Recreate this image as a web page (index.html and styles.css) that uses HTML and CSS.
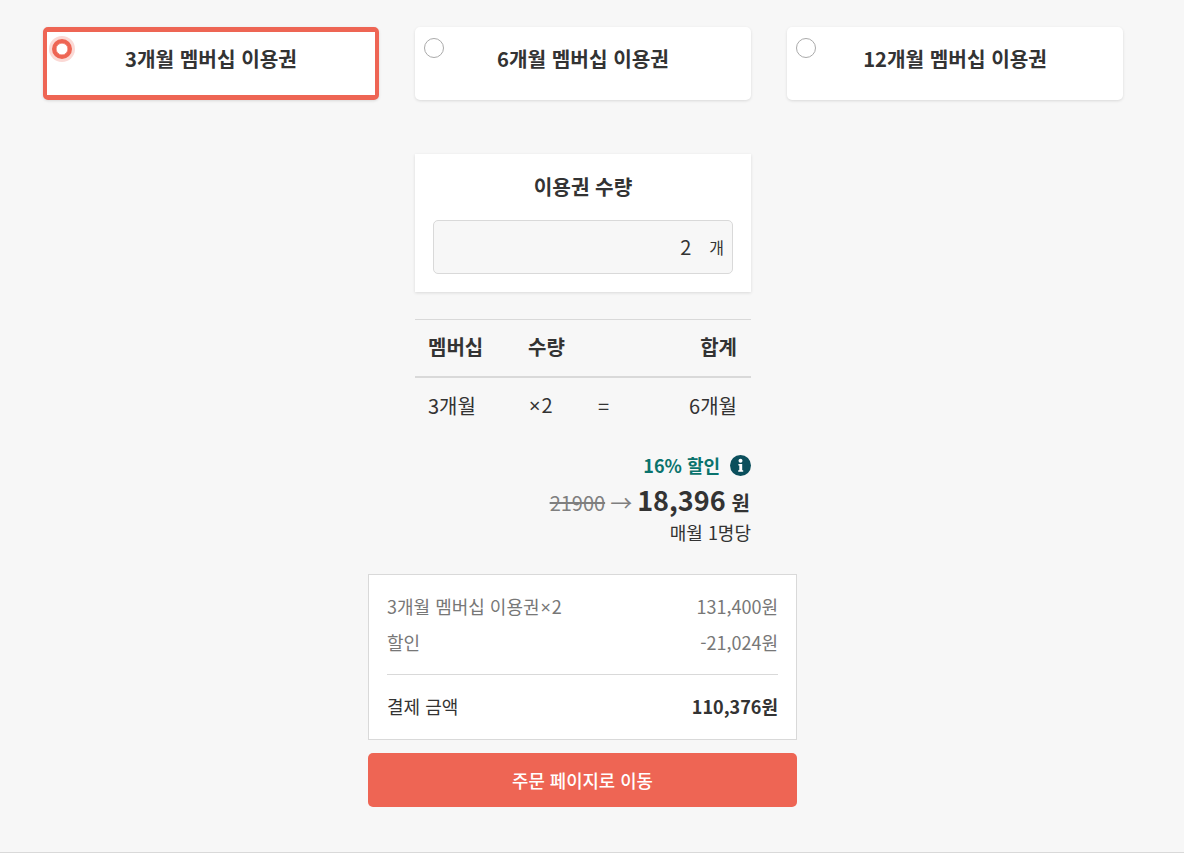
FILE: index.html
```html
<!DOCTYPE html>
<html lang="ko">
<head>
<meta charset="utf-8">
<title>멤버십 이용권</title>
<link rel="stylesheet" href="styles.css">
</head>
<body>
<main class="page">
  <section class="plans">
    <div class="plan plan-active"><span class="radio radio-on"></span><span class="plan-name">3개월 멤버십 이용권</span></div>
    <div class="plan"><span class="radio"></span><span class="plan-name">6개월 멤버십 이용권</span></div>
    <div class="plan"><span class="radio"></span><span class="plan-name">12개월 멤버십 이용권</span></div>
  </section>
  <section class="column">
    <div class="qty-card">
      <h2 class="qty-title">이용권 수량</h2>
      <div class="qty-input"><span class="qty-value">2</span><span class="qty-unit">개</span></div>
    </div>
    <div class="calc">
      <div class="calc-row calc-head">
        <span class="c1">멤버십</span><span class="c2">수량</span><span class="c3"></span><span class="c4">합계</span>
      </div>
      <div class="calc-row calc-body">
        <span class="c1">3개월</span><span class="c2"><span class="times">×</span>2</span><span class="c3">=</span><span class="c4">6개월</span>
      </div>
    </div>
    <div class="price">
      <div class="discount"><span>16% 할인</span>
        <svg class="info" viewBox="0 0 21 21" width="21" height="21"><circle cx="10.5" cy="10.5" r="10.5" fill="#0b4f5c"/><circle cx="10.5" cy="5.8" r="2" fill="#fff"/><path d="M8.4 9h3.8v6.2h1v1.6H8.2v-1.6h1.1V10.6H8.4z" fill="#fff"/></svg>
      </div>
      <div class="price-line"><span class="old">21900</span><span class="arrow">→</span><strong class="now">18,396</strong><strong class="won">원</strong></div>
      <div class="per">매월 1명당</div>
    </div>
  </section>
  <section class="order">
    <div class="summary">
      <div class="sum-row"><span>3개월 멤버십 이용권<span class="times">×</span>2</span><span>131,400원</span></div>
      <div class="sum-row"><span>할인</span><span>-21,024원</span></div>
      <div class="sum-total"><span>결제 금액</span><strong>110,376원</strong></div>
    </div>
    <button class="go" type="button">주문 페이지로 이동</button>
  </section>
</main>
</body>
</html>
```
FILE: styles.css
```css
* { box-sizing: border-box; }
html, body { margin: 0; padding: 0; }
body {
  background: #f7f7f7;
  color: #333;
  font-family: "Noto Sans CJK KR", "Noto Sans", sans-serif;
  height: 853px;
  overflow: hidden;
}
.page {
  height: 853px;
  padding-top: 27px;
  border-bottom: 1px solid #d9d9d9;
}
.plans {
  display: grid;
  grid-template-columns: repeat(3, 336px);
  gap: 36px;
  padding-left: 43px;
}
.plan {
  position: relative;
  height: 73px;
  background: #fff;
  border-radius: 5px;
  box-shadow: 0 1px 3px rgba(0,0,0,.12);
  text-align: center;
  padding-top: 15px;
}
.plan-active { border: 5px solid #ee6554; border-width: 5px 4px; padding-top: 10px; }
.plan-name { font-size: 20.2px; font-weight: 700; line-height: 34px; color: #333; }
.radio {
  position: absolute;
  left: 9px; top: 11px;
  width: 20px; height: 20px;
  border: 1px solid #aaa;
  border-radius: 50%;
  background: #fff;
}
.radio-on {
  left: 5px; top: 7px;
  border: 4px solid #ee6554;
  box-shadow: 0 0 0 3px #fbd9d5, inset 0 0 0 .5px #ee6554;
}
.column { width: 336px; margin: 54px 0 0 415px; }
.qty-card {
  height: 138px;
  background: #fff;
  box-shadow: 0 1px 3px rgba(0,0,0,.12);
  padding: 18px 18px 0;
}
.qty-title { margin: 0; font-size: 20.2px; font-weight: 700; line-height: 30px; text-align: center; }
.qty-input {
  display: flex;
  justify-content: flex-end;
  align-items: center;
  height: 54px;
  margin-top: 18px;
  padding-right: 8px;
  background: #f7f7f7;
  border: 1px solid #d9d9d9;
  border-radius: 5px;
}
.qty-value { font-size: 20px; line-height: 30px; }
.qty-unit { font-size: 16px; margin-left: 18px; }
.calc { margin-top: 27px; border-top: 1px solid #d9d9d9; }
.calc-row { display: flex; padding: 0 14px 0 13px; font-size: 20px; line-height: 30px; }
.calc-head { height: 58px; padding-bottom: 2px; align-items: center; font-weight: 700; border-bottom: 2px solid #d9d9d9; }
.calc-body { height: 57px; padding-bottom: 2px; align-items: center; }
.c1 { width: 100px; }
.c2 { width: 70px; }
.c3 { width: 20px; }
.c4 { flex: 1; text-align: right; }
.times { font-family: "Noto Sans", sans-serif; margin: 0 1px; }
.price { text-align: right; margin-top: 17px; }
.discount { display: flex; justify-content: flex-end; align-items: center; gap: 10px; height: 26px; color: #0a736d; font-size: 18px; font-weight: 700; }
.info { display: block; }
.price-line { display: flex; justify-content: flex-end; align-items: baseline; height: 40px; margin-top: 2px; padding-right: 1px; }
.old { font-size: 20px; color: #7f7f7f; text-decoration: line-through; }
.arrow { font-size: 22px; color: #7f7f7f; margin: 0 5px; }
.now { font-size: 27px; font-weight: 700; }
.won { font-size: 20px; font-weight: 700; margin-left: 6px; }
.per { font-size: 18px; line-height: 24px; }
.order { width: 429px; margin: 30px 0 0 368px; }
.summary {
  height: 166px;
  background: #fff;
  border: 1px solid #d9d9d9;
  padding: 14px 18px 0;
  font-size: 18px;
}
.sum-row { display: flex; justify-content: space-between; height: 35.5px; line-height: 35.5px; color: #777; }
.sum-total { display: flex; justify-content: space-between; align-items: center; height: 65px; padding-bottom: 2px; margin-top: 14px; border-top: 1px solid #d9d9d9; color: #333; }
.sum-total strong { font-weight: 700; }
.go {
  display: block;
  width: 100%;
  height: 54px;
  margin-top: 13px;
  border: 0;
  border-radius: 5px;
  background: #ee6554;
  color: #fff;
  font: 500 17.8px "Noto Sans CJK KR", "Noto Sans", sans-serif;
}
```
